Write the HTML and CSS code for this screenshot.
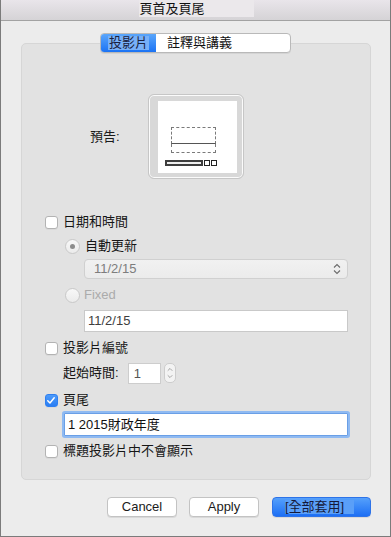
FILE: index.html
```html
<!DOCTYPE html>
<html lang="zh-Hant">
<head>
<meta charset="utf-8">
<title>頁首及頁尾</title>
<link rel="stylesheet" href="styles.css">
</head>
<body>
<div class="window">
  <div class="titlebar"><span class="title">頁首及頁尾</span></div>
  <div class="body">
    <div class="seg">
      <div class="seg-on"><span class="hl">投影片</span></div>
      <div class="seg-off">註釋與講義</div>
    </div>
    <div class="panel">
      <div class="preview-row">
        <span class="preview-label">預告:</span>
        <div class="preview-frame">
          <div class="slide">
            <div class="ph"><div class="ph-top"></div><div class="ph-bottom"></div></div>
            <div class="foot"><span class="bar"></span><span class="sq"></span><span class="sq"></span></div>
          </div>
        </div>
      </div>

      <div class="row check-row r-date"><span class="cb"></span><span class="lbl">日期和時間</span></div>
      <div class="row radio-row r-auto"><span class="radio on"></span><span class="lbl">自動更新</span></div>
      <div class="select">
        <span class="sel-text">11/2/15</span>
        <svg class="chev" width="8" height="12" viewBox="0 0 8 12"><path d="M1 4.5 L4 1.5 L7 4.5" fill="none" stroke="#6b6b6b" stroke-width="1.1"/><path d="M1 7.5 L4 10.5 L7 7.5" fill="none" stroke="#6b6b6b" stroke-width="1.1"/></svg>
      </div>
      <div class="row radio-row r-fixed"><span class="radio"></span><span class="lbl dis">Fixed</span></div>
      <div class="field">11/2/15</div>

      <div class="row check-row r-num"><span class="cb"></span><span class="lbl">投影片編號</span></div>
      <div class="row start-row">
        <span class="lbl">起始時間:</span>
        <span class="num">1</span>
        <span class="stepper">
          <svg width="11" height="20" viewBox="0 0 11 20"><path d="M3 7.5 L5.5 5 L8 7.5" fill="none" stroke="#9a9a9a" stroke-width="1"/><path d="M3 12.5 L5.5 15 L8 12.5" fill="none" stroke="#9a9a9a" stroke-width="1"/></svg>
        </span>
      </div>

      <div class="row check-row r-foot"><span class="cb checked"><svg width="13" height="13" viewBox="0 0 13 13"><path d="M3 6.8 L5.4 9.2 L10 3.6" fill="none" stroke="#fff" stroke-width="1.6" stroke-linecap="round" stroke-linejoin="round"/></svg></span><span class="lbl">頁尾</span></div>
      <div class="field focus">1 2015財政年度</div>
      <div class="row check-row r-title"><span class="cb"></span><span class="lbl">標題投影片中不會顯示</span></div>
    </div>

    <div class="buttons">
      <button class="btn">Cancel</button>
      <button class="btn">Apply</button>
      <button class="btn primary"><span class="hl2">[全部套用]</span></button>
    </div>
  </div>
</div>
</body>
</html>
```

FILE: styles.css
```css
* { box-sizing: border-box; }
html, body { margin: 0; padding: 0; background: #ececec; }
body {
  font-family: "Liberation Sans", "Noto Sans CJK TC", sans-serif;
  font-size: 13px;
  color: #1b1b1b;
}
.window {
  width: 391px;
  height: 537px;
  border-left: 1px solid #7b7b7b;
  border-right: 1px solid #7b7b7b;
  border-bottom: 1px solid #7b7b7b;
  background: #ececec;
  display: flex;
  flex-direction: column;
}
.titlebar {
  height: 21px;
  border-bottom: 1px solid #a2a2a2;
  background: linear-gradient(#e9e5ea, #d5d3d6);
  display: flex;
  justify-content: center;
  align-items: flex-start;
}
.title {
  display: inline-block;
  width: 115px;
  height: 17px;
  line-height: 18px;
  padding-left: 1px;
  background: #ebe8eb;
  color: #111;
  font-size: 13px;
  margin-left: 1px;
}
.body {
  flex: 1;
  display: flex;
  flex-direction: column;
}
.seg {
  position: relative;
  z-index: 1;
  margin: 12px 0 -10px 99px;
  width: 191px;
  height: 20px;
  display: flex;
  border: 1px solid #b9b9b9;
  border-radius: 4px;
  background: #fff;
  overflow: hidden;
  box-shadow: 0 1px 0 rgba(0,0,0,0.06);
}
.seg-on {
  width: 55px;
  background: linear-gradient(#5aa6fb, #1b73f4);
  display: flex;
  align-items: center;
  justify-content: center;
}
.hl {
  background: #77b0f8;
  color: #1a2240;
  line-height: 14px;
  padding: 0 1px;
}
.seg-off {
  flex: 1;
  padding-left: 11px;
  line-height: 18px;
  color: #111;
}
.panel {
  margin: 0 19px 0 20px;
  height: 437px;
  border: 1px solid #d6d6d6;
  border-radius: 5px;
  background: #e2e2e2;
  padding-top: 50px;
  display: flex;
  flex-direction: column;
}
.preview-row {
  display: flex;
  align-items: center;
  padding-left: 68px;
}
.preview-label { width: 58px; line-height: 16px; }
.preview-frame {
  width: 96px;
  height: 85px;
  border: 1px solid #c6c6c6;
  border-radius: 6px;
  background: #d8d8d8;
  box-shadow: inset 0 0 0 1px #fbfbfb;
  padding: 6px 6px 5px 9px;
}
.slide {
  width: 79px;
  height: 72px;
  background: #fff;
  padding: 26px 0 0 13px;
  display: flex;
  flex-direction: column;
}
.ph {
  width: 45px;
  height: 26px;
  display: flex;
  flex-direction: column;
}
.ph-top {
  height: 17px;
  border: 1px dashed #7a7a7a;
  border-bottom: 1px solid #555;
}
.ph-bottom {
  flex: 1;
  border: 1px dashed #7a7a7a;
  border-top: 0;
}
.foot {
  display: flex;
  margin: 7px 0 0 -6px;
  height: 6px;
}
.bar {
  width: 38px;
  height: 6px;
  border: 2px solid #3d3d3d;
  background: #eee;
}
.sq {
  width: 6px;
  height: 6px;
  border: 1px solid #222;
  background: #fff;
  margin-left: 1px;
}
.row {
  display: flex;
  align-items: center;
  height: 20px;
}
.lbl { line-height: 16px; color: #161616; }
.lbl.dis { color: #ababab; }
.check-row { padding-left: 23px; }
.check-row .lbl { margin-left: 5px; }
.cb {
  width: 13px;
  height: 13px;
  border: 1px solid #b3b3b3;
  border-radius: 3px;
  background: #fff;
  box-shadow: 0 1px 0 rgba(0,0,0,0.04);
  display: flex;
}
.cb.checked {
  border-color: #2f7ff0;
  background: linear-gradient(#4d9bfa, #2a7ef4);
}
.cb.checked svg { margin: -1px 0 0 -1px; }
.radio-row { padding-left: 43px; }
.radio-row .lbl { margin-left: 5px; }
.radio-row.r-fixed .lbl { margin-left: 4px; }
.radio {
  width: 15px;
  height: 15px;
  border: 1px solid #c9c9c9;
  border-radius: 50%;
  background: linear-gradient(#f8f8f8, #ebebeb);
  display: flex;
  align-items: center;
  justify-content: center;
}
.radio.on::after {
  content: "";
  width: 5px;
  height: 5px;
  border-radius: 50%;
  background: #8c8c8c;
}
.r-date { margin-top: 33px; }
.r-auto { margin-top: 4px; }
.select {
  margin: 3px 0 0 62px;
  width: 264px;
  height: 20px;
  border: 1px solid #d0d0d0;
  border-radius: 4px;
  background: linear-gradient(#f1f1f1, #ebebeb);
  display: flex;
  align-items: center;
  justify-content: space-between;
  padding: 0 6px 0 9px;
}
.sel-text { color: #7d7d7d; line-height: 16px; }
.r-fixed { margin-top: 6px; }
.field {
  margin: 5px 0 0 62px;
  width: 264px;
  height: 22px;
  border: 1px solid #c9c9c9;
  background: #fff;
  color: #3e3e3e;
  line-height: 20px;
  padding-left: 3px;
}
.field.focus {
  margin: 3px 0 0 42px;
  width: 284px;
  height: 23px;
  border: 1px solid #6a9fe6;
  box-shadow: 0 0 0 2px #8fbaf2;
  border-radius: 1px;
  color: #111;
  line-height: 21px;
  padding-left: 3px;
}
.r-num { margin-top: 6px; }
.start-row {
  margin-top: 4px;
  height: 22px;
  padding-left: 41px;
}
.num {
  margin-left: 9px;
  width: 33px;
  height: 21px;
  border: 1px solid #cdcdcd;
  background: #fff;
  line-height: 19px;
  padding-left: 5px;
  color: #555;
}
.stepper {
  margin-left: 3px;
  width: 12px;
  height: 20px;
  border: 1px solid #cdcdcd;
  border-radius: 5px;
  background: #f3f3f3;
  display: flex;
  align-items: center;
  justify-content: center;
  overflow: hidden;
}
.r-foot { margin-top: 6px; }
.r-title { margin-top: 5px; }
.buttons {
  display: flex;
  justify-content: flex-end;
  margin: 17px 19px 0 0;
  gap: 12px;
}
.btn {
  font-family: "Liberation Sans", "Noto Sans CJK TC", sans-serif;
  font-size: 13px;
  height: 20px;
  width: 70px;
  padding: 0;
  border: 1px solid #c3c3c3;
  border-radius: 4px;
  background: #fff;
  color: #1b1b1b;
  line-height: 18px;
  box-shadow: 0 1px 0 rgba(0,0,0,0.08);
}
.btn.primary {
  width: 99px;
  margin-left: 1px;
  border-color: #2e73e8;
  background: linear-gradient(#55a0fb, #1d6ff4);
  display: flex;
  align-items: center;
  padding-left: 12px;
}
.hl2 {
  background: #5a9ff8;
  color: #15193a;
  line-height: 14px;
  padding-right: 10px;
}
```
